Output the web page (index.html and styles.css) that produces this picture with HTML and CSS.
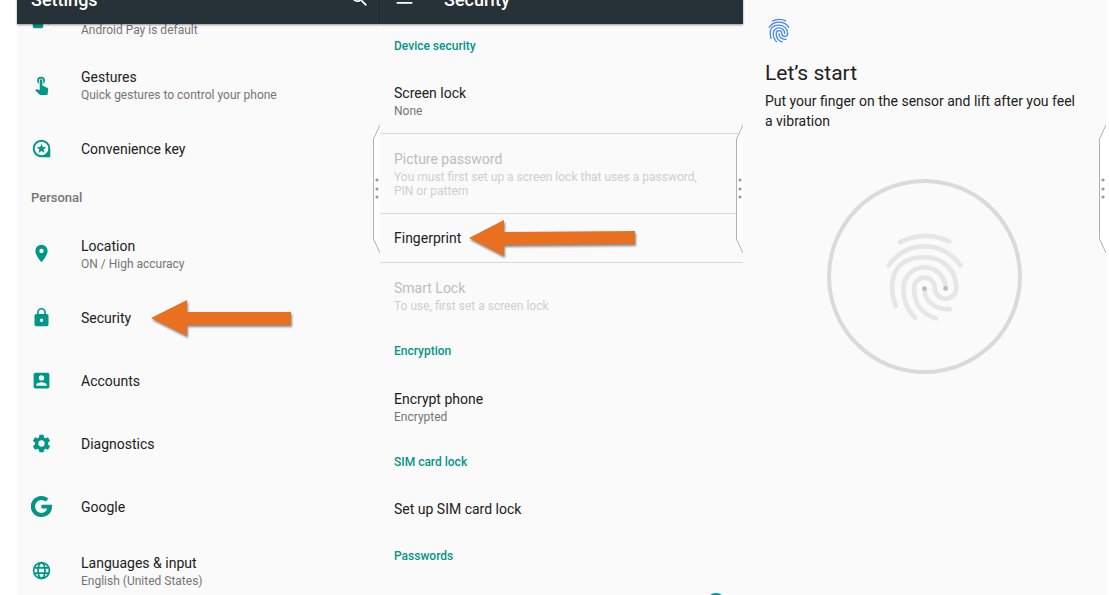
FILE: index.html
```html
<!DOCTYPE html>
<html lang="en">
<head>
    <meta charset="utf-8">
    <title>Fingerprint setup</title>
    <link rel="stylesheet" href="styles.css">
</head>
<body>
    <!-- Shared drawings -->
    <svg class="defs" aria-hidden="true">
        <symbol id="fingerprint" viewBox="198 182 236 274">
            <path d="M243 215Q316 178 390 213"/>
            <path d="M209 284C260 209 372 209 423 284"/>
            <path d="M230 406C205 330 222 260 316 260C375 260 411 303 411 352A32 32 0 0 1 347 352A31 31 0 0 0 285 352C285 400 310 432 351 443"/>
            <path d="M379 353A63 63 0 0 0 253 353C253 390 265 418 288 441"/>
            <path d="M316 354C316 390 345 418 392 415"/>
        </symbol>
        <symbol id="handle" viewBox="0 0 7 128">
            <path d="M7 0L.5 14V114L7 128" fill="#fff" stroke="#b0b0b0"/>
            <g fill="#999">
                <circle cx="4" cy="55" r="1.6"/>
                <circle cx="4" cy="64" r="1.6"/>
                <circle cx="4" cy="72" r="1.6"/>
            </g>
        </symbol>
    </svg>

    <main class="screens">
        <section class="screen">
            <header class="app-bar">
                <h1>Settings</h1>
                <button class="icon-button push" aria-label="Search">
                    <svg class="icon" viewBox="0 0 24 24"><path d="M15.5 14h-.79l-.28-.27A6.47 6.47 0 0 0 16 9.500 6.500 6.500 0 1 0 9.500 16c1.610 0 3.090-.59 4.230-1.570l.27.28v.79l5 4.990L20.490 19l-4.990-5zm-6 0a4.500 4.500 0 1 1 0-9 4.500 4.500 0 0 1 0 9z"/></svg>
                </button>
            </header>
            <ul class="settings">
                <li class="row two-line">
                    <svg class="icon" viewBox="0 0 24 24"><path fill-rule="evenodd" d="M4 2h8a2 2 0 0 1 2 2v16a2 2 0 0 1-2 2H4a2 2 0 0 1-2-2V4q0-2 2-2zm0 3v12h8V5zM17 8q3 4 0 9l-1-1q2-4 0-7zM20 6q4 6 0 12l-1-1q3-5 0-10z"/></svg>
                    <div>
                        <h3>Tap &amp; pay</h3>
                        <p>Android Pay is default</p>
                    </div>
                </li>
                <li class="row two-line">
                    <svg class="icon" viewBox="0 0 24 24"><path d="M9 11.240V7.500a2.500 2.500 0 0 1 5 0v3.740c1.210-.81 2-2.180 2-3.740a4.500 4.500 0 1 0-9 0c0 1.560.79 2.930 2 3.740zm9.840 4.630l-4.540-2.260c-.17-.07-.35-.11-.54-.11H13v-6a1.500 1.500 0 0 0-3 0v10.740l-3.430-.72c-.08-.01-.15-.03-.24-.03-.31 0-.59.13-.79.33l-.79.8 4.940 4.940c.27.27.65.44 1.060.44h6.790c.75 0 1.330-.55 1.440-1.280l.75-5.270c.01-.07.02-.14.02-.2 0-.62-.38-1.160-.91-1.380z"/></svg>
                    <div>
                        <h3>Gestures</h3>
                        <p>Quick gestures to control your phone</p>
                    </div>
                </li>
                <li class="row">
                    <svg class="icon" viewBox="0 0 24 24"><path fill-rule="evenodd" d="M12 2a10 10 0 1 0 0 20h10V12A10 10 0 0 0 12 2zm0 2.200a7.800 7.800 0 1 1 0 15.600 7.800 7.800 0 0 1 0-15.600z"/><path d="M12 6.500l1.500 3.700 4 .3-3.100 2.500 1 3.900L12 14.800l-3.400 2.100 1-3.900-3.100-2.500 4-.3z"/></svg>
                    <h3>Convenience key</h3>
                </li>
            </ul>
            <h2 class="group">Personal</h2>
            <ul>
                <li class="row two-line">
                    <svg class="icon" viewBox="0 0 24 24"><path d="M12 2a7 7 0 0 0-7 7c0 5.250 7 13 7 13s7-7.750 7-13a7 7 0 0 0-7-7zm0 9.500a2.500 2.500 0 1 1 0-5 2.500 2.500 0 0 1 0 5z"/></svg>
                    <div>
                        <h3>Location</h3>
                        <p>ON / High accuracy</p>
                    </div>
                </li>
                <li class="row">
                    <svg class="icon" viewBox="0 0 24 24"><path d="M18 8h-1V6A5 5 0 0 0 7 6v2H6a2 2 0 0 0-2 2v10c0 1.100.9 2 2 2h12a2 2 0 0 0 2-2V10a2 2 0 0 0-2-2zm-6 9a2 2 0 1 1 0-4 2 2 0 0 1 0 4zm3.100-9H8.900V6a3.100 3.100 0 0 1 6.200 0v2z"/></svg>
                    <h3>Security</h3>
                    <svg class="arrow arrow-short" viewBox="0 0 140 36"><path d="M0 18L36 0V12H140V25H36V36z"/></svg>
                </li>
                <li class="row">
                    <svg class="icon" viewBox="0 0 24 24"><path d="M3 5v14a2 2 0 0 0 2 2h14a2 2 0 0 0 2-2V5a2 2 0 0 0-2-2H5a2 2 0 0 0-2 2zm12 4a3 3 0 1 1-6 0 3 3 0 0 1 6 0zm-9 8c0-2 4-3.100 6-3.100s6 1.100 6 3.100v1H6v-1z"/></svg>
                    <h3>Accounts</h3>
                </li>
                <li class="row">
                    <svg class="icon" viewBox="0 0 24 24"><path fill-rule="evenodd" d="M9.600 2h4.800l.5 3 1.700 1 2.800-1.100 2.400 4.100-2.300 1.900v2.200l2.300 1.900-2.400 4.100-2.800-1.100-1.700 1-.5 3H9.600l-.5-3-1.700-1-2.800 1.100L2.200 15l2.300-1.900v-2.200L2.200 9l2.400-4.100L7.400 6l1.700-1zM12 8.400a3.600 3.600 0 1 0 0 7.200 3.600 3.600 0 0 0 0-7.200z"/></svg>
                    <h3>Diagnostics</h3>
                </li>
                <li class="row">
                    <svg class="icon" viewBox="0 0 24 24"><path d="M12 10v4.200h6.500c-.8 2.900-3.200 5.100-6.500 5.100a7.300 7.300 0 1 1 4.700-12.900l3.200-3.200A12 12 0 1 0 12 24c7 0 12-5 12-12v-2z"/></svg>
                    <h3>Google</h3>
                </li>
                <li class="row two-line">
                    <svg class="icon outline" viewBox="0 0 24 24"><circle cx="12" cy="12" r="9"/><ellipse cx="12" cy="12" rx="4" ry="9"/><path d="M4 9h16M4 15h16"/></svg>
                    <div>
                        <h3>Languages &amp; input</h3>
                        <p>English (United States)</p>
                    </div>
                </li>
            </ul>
            <svg class="handle"><use href="#handle"/></svg>
        </section>

        <section class="screen security">
            <header class="app-bar">
                <button class="icon-button" aria-label="Menu">
                    <svg class="icon" viewBox="0 0 24 24"><path d="M3 18h18v-2H3v2zm0-5h18v-2H3v2zm0-7v2h18V6H3z"/></svg>
                </button>
                <h1>Security</h1>
            </header>
            <h2 class="category first">Device security</h2>
            <div class="option">
                <h3>Screen lock</h3>
                <p>None</p>
            </div>
            <div class="option ruled disabled">
                <h3>Picture password</h3>
                <p>You must first set up a screen lock that uses a password, PIN or pattern</p>
            </div>
            <div class="option single ruled">
                <h3>Fingerprint</h3>
                <svg class="arrow arrow-long" viewBox="0 0 166 36"><path d="M0 18L35 0V12L166 11V24L35 25V36z"/></svg>
            </div>
            <div class="option ruled disabled">
                <h3>Smart Lock</h3>
                <p>To use, first set a screen lock</p>
            </div>
            <h2 class="category">Encryption</h2>
            <div class="option">
                <h3>Encrypt phone</h3>
                <p>Encrypted</p>
            </div>
            <h2 class="category">SIM card lock</h2>
            <div class="option single">
                <h3>Set up SIM card lock</h3>
            </div>
            <h2 class="category">Passwords</h2>
            <div class="option single">
                <label for="show-passwords">Make passwords visible</label>
                <input class="switch" type="checkbox" id="show-passwords" checked>
            </div>
            <svg class="handle"><use href="#handle"/></svg>
        </section>

        <section class="screen enroll">
            <svg class="badge"><use href="#fingerprint"/></svg>
            <h1>Let’s start</h1>
            <p>Put your finger on the sensor and lift after you feel a vibration</p>
            <div class="ring">
                <svg class="print" viewBox="198 182 236 274">
                    <use href="#fingerprint" x="198" y="182" width="236" height="274"/>
                    <g class="dots">
                        <circle cx="316" cy="354" r="7"/>
                        <circle cx="379" cy="353" r="7"/>
                    </g>
                </svg>
            </div>
            <svg class="handle"><use href="#handle"/></svg>
        </section>
    </main>
</body>
</html>
```

FILE: styles.css
```css
* {
    box-sizing: border-box;
}

body {
    margin: 0;
    background: #fff;
    color: #212121;
    font-family: Roboto, "Liberation Sans", sans-serif;
    font-size: 14px;
    line-height: 20px;
}

h1, h2, h3, p, ul {
    margin: 0;
    padding: 0;
    list-style: none;
}

h3, label {
    font-size: 14px;
    font-weight: 400;
    line-height: 20px;
}

.defs {
    position: absolute;
    width: 0;
    height: 0;
}

.screens {
    display: grid;
    grid-template-columns: repeat(3, 1fr);
    height: 100vh;
    padding: 0 3px 0 17px;
    overflow: hidden;
}

.screen {
    position: relative;
    min-width: 0;
    background: #fafafa;
}

/* App bar, scrolled partly out of view */
.app-bar {
    position: relative;
    z-index: 1;
    display: flex;
    align-items: center;
    gap: 29px;
    height: 48px;
    margin-top: -24px;
    padding: 0 10px 0 14px;
    background: #263238;
    color: #fff;
    box-shadow: 0 1px 2px rgba(0, 0, 0, 0.4);
}

.app-bar h1 {
    font-size: 18px;
    font-weight: 500;
    line-height: 24px;
}

.icon-button {
    display: flex;
    padding: 0 0 4px;
    border: none;
    background: none;
    cursor: pointer;
}

.push {
    margin-left: auto;
}

.icon {
    flex: none;
    width: 21px;
    height: 21px;
    fill: #009688;
}

.app-bar .icon {
    fill: #fff;
}

.row .outline {
    fill: none;
    stroke: #009688;
    stroke-width: 2;
}

/* Settings list */
.settings {
    margin-top: -37px;
}

.row {
    display: flex;
    align-items: center;
    height: 63px;
    padding-left: 14px;
}

.row .icon {
    margin-right: 29px;
}

.two-line {
    height: 65px;
}

.row p, .option p {
    color: #757575;
    font-size: 12px;
    line-height: 14px;
    margin-top: 1px;
}

.group {
    height: 41px;
    padding: 8px 14px;
    color: #757575;
    font-size: 13px;
    font-weight: 500;
}

.arrow {
    flex: none;
    height: 36px;
    fill: #e87020;
    overflow: visible;
    filter: drop-shadow(1px 2px 1px rgba(0, 0, 0, 0.45));
}

.arrow-short {
    width: 140px;
    margin-left: 20px;
}

.arrow-long {
    width: 166px;
    margin-left: 8px;
}

/* Security list */
.category {
    display: flex;
    align-items: center;
    height: 46px;
    padding: 0 14px;
    color: #009688;
    font-size: 12px;
    font-weight: 500;
}

.first {
    height: 44px;
}

.option {
    padding: 15px 28px 15px 14px;
}

.single {
    display: flex;
    align-items: center;
    box-sizing: content-box;
    height: 48px;
    padding: 0 14px;
}

.ruled {
    border-top: 1px solid #dadada;
}

.disabled h3 {
    color: #bdbdbd;
}

.option.disabled p {
    color: #cfcfcf;
}

.switch {
    appearance: none;
    width: 20px;
    height: 20px;
    margin: 0 3px 0 auto;
    border-radius: 50%;
    background: #009688;
}

/* Edge handle */
.handle {
    position: absolute;
    top: 125px;
    right: 0;
    width: 7px;
    height: 128px;
}

/* Fingerprint enrolment */
.enroll {
    padding: 18px 22px;
}

.enroll h1 {
    margin: 16px 0 4px;
    font-size: 21px;
    font-weight: 400;
    line-height: 28px;
}

.badge {
    display: block;
    width: 28px;
    height: 25px;
    fill: none;
    stroke: #4285f4;
    stroke-width: 14;
    stroke-linecap: round;
}

.ring {
    display: flex;
    align-items: center;
    justify-content: center;
    width: 195px;
    height: 195px;
    margin: 48px auto 0;
    border: 4px solid #dadada;
    border-radius: 50%;
}

.print {
    width: 79px;
    height: 92px;
    fill: none;
    stroke: #e6e6e6;
    stroke-width: 14;
    stroke-linecap: round;
}

.dots {
    fill: #bdbdbd;
    stroke: none;
}
```
